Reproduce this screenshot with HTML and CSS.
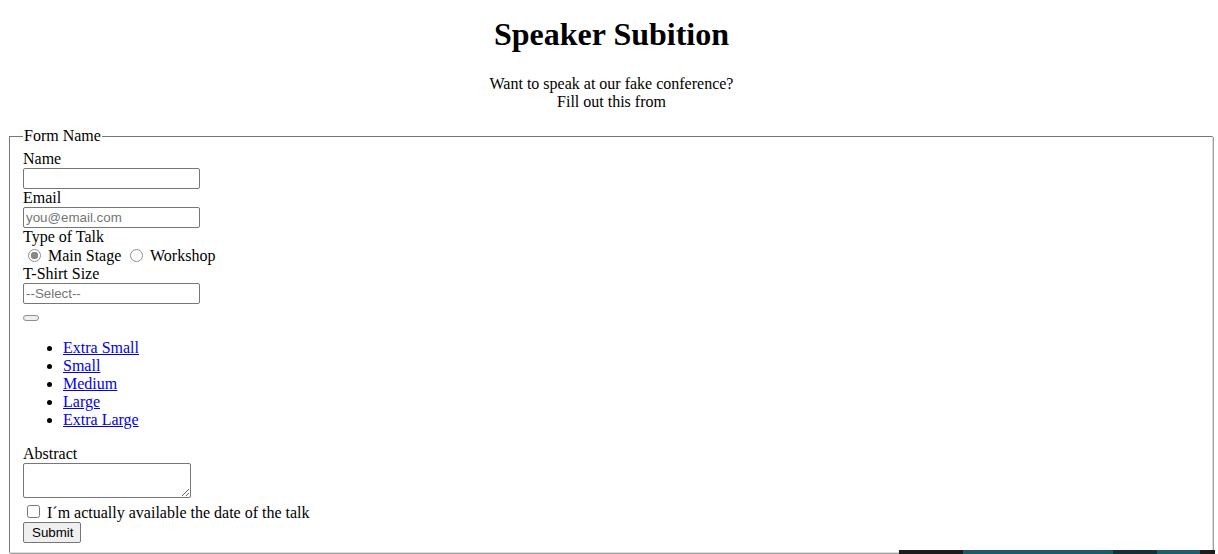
FILE: index.html
```html
<!DOCTYPE html>
<html>
<head>
<meta charset="utf-8">
<title>Speaker Subition</title>
<link rel="stylesheet" href="styles.css">
</head>
<body class="page">
<header class="intro">
  <h1 class="title">Speaker Subition</h1>
  <p class="lead">Want to speak at our fake conference?<br>Fill out this from</p>
</header>
<form class="form">
  <fieldset class="box">
    <legend class="legend">Form Name</legend>
    <label class="field-label" for="name">Name</label><br>
    <input class="text" id="name" type="text"><br>
    <label class="field-label" for="email">Email</label><br>
    <input class="text" id="email" type="email" placeholder="you@email.com"><br>
    <label class="field-label">Type of Talk</label><br>
    <label class="radio"><input class="radio-input" type="radio" name="talk" checked> Main Stage</label>
    <label class="radio"><input class="radio-input" type="radio" name="talk"> Workshop</label><br>
    <label class="field-label" for="size">T-Shirt Size</label><br>
    <input class="text" id="size" type="text" placeholder="--Select--"><br>
    <button class="empty-btn" type="button"></button>
    <ul class="sizes">
      <li><a href="#">Extra Small</a></li>
      <li><a href="#">Small</a></li>
      <li><a href="#">Medium</a></li>
      <li><a href="#">Large</a></li>
      <li><a href="#">Extra Large</a></li>
    </ul>
    <label class="field-label" for="abstract">Abstract</label><br>
    <textarea class="area" id="abstract"></textarea><br>
    <label class="check"><input class="check-input" type="checkbox"> I´m actually available the date of the talk</label><br>
    <button class="submit" type="submit">Submit</button>
  </fieldset>
</form>
<div class="strip"><span class="s1"></span><span class="s2"></span><span class="s3"></span><span class="s4"></span><span class="s5"></span></div>
</body>
</html>
```
FILE: styles.css
```css
html, body { background: #fff; }
.page {
  margin: 8px 3px 8px 8px;
  font-family: "Liberation Serif", "Times New Roman", serif;
  font-size: 16px;
  color: #000;
}
.intro { text-align: center; }
.title { font-size: 32px; font-weight: bold; margin: 8px 0 22px; }
.lead { margin: 16px 0; }
.form { margin: 0; }
.box {
  margin: 0 2px 0 1px;
  border-color: #767676 #dcdcdc #dcdcdc #767676;
  border-style: solid;
  border-width: 1px;
  box-shadow: inset 1px 1px 0 #fff, 1px 1px 0 #a0a0a0;
  padding: 5px 12px 9px 13px;
}
.legend { padding: 0 1px; }
.text, .area, .submit, .empty-btn {
  font-family: "Liberation Sans", Arial, sans-serif;
  font-size: 13.333px;
}
.text {
  width: 171px;
  height: 17px;
  padding: 1px 2px;
  border: 1px solid #767676;
  border-radius: 2px;
  margin: 0;
  box-sizing: content-box;
}
.text::placeholder { color: #757575; }
.radio-input {
  appearance: none;
  -webkit-appearance: none;
  width: 13px; height: 13px;
  margin: 3px 3px 0 5px;
  border: 1px solid #8f8f8f;
  border-radius: 50%;
  box-sizing: border-box;
  background: #fff;
  vertical-align: -1px;
}
.radio-input:checked {
  background: radial-gradient(circle, #8a8a8a 0 3.5px, #fff 4px);
}
.empty-btn {
  margin: 11px 0 0;
  width: 16px; height: 6px; padding: 0;
  border: 1px solid #8f8f8f; border-radius: 3px;
  background: #efefef;
  display: block;
}
.sizes { margin: 18px 0 16px; padding-left: 40px; }
.sizes a { color: #0000ee; }
.area {
  width: 162px; height: 29px;
  padding: 2px; margin: 0;
  border: 1px solid #767676; border-radius: 2px;
}
.check-input { margin: 3px 3px 3px 4px; }
.submit {
  height: 21px;
  padding: 0 7px 0 8px; margin: 0;
  border: 1px solid #767676; border-radius: 2px;
  background: #efefef; color: #000;
}
.strip {
  display: flex;
  width: 319px;
  height: 10px;
  margin: -3px -3px 0 auto;
}
.strip span { height: 100%; }
.s1 { width: 64px; background: #1c1c1c; }
.s2 { width: 150px; background: #1d5a68; }
.s3 { width: 44px; background: #132f3a; }
.s4 { width: 43px; background: #1f5d6b; }
.s5 { width: 18px; background: #1c1c1c; }
```
